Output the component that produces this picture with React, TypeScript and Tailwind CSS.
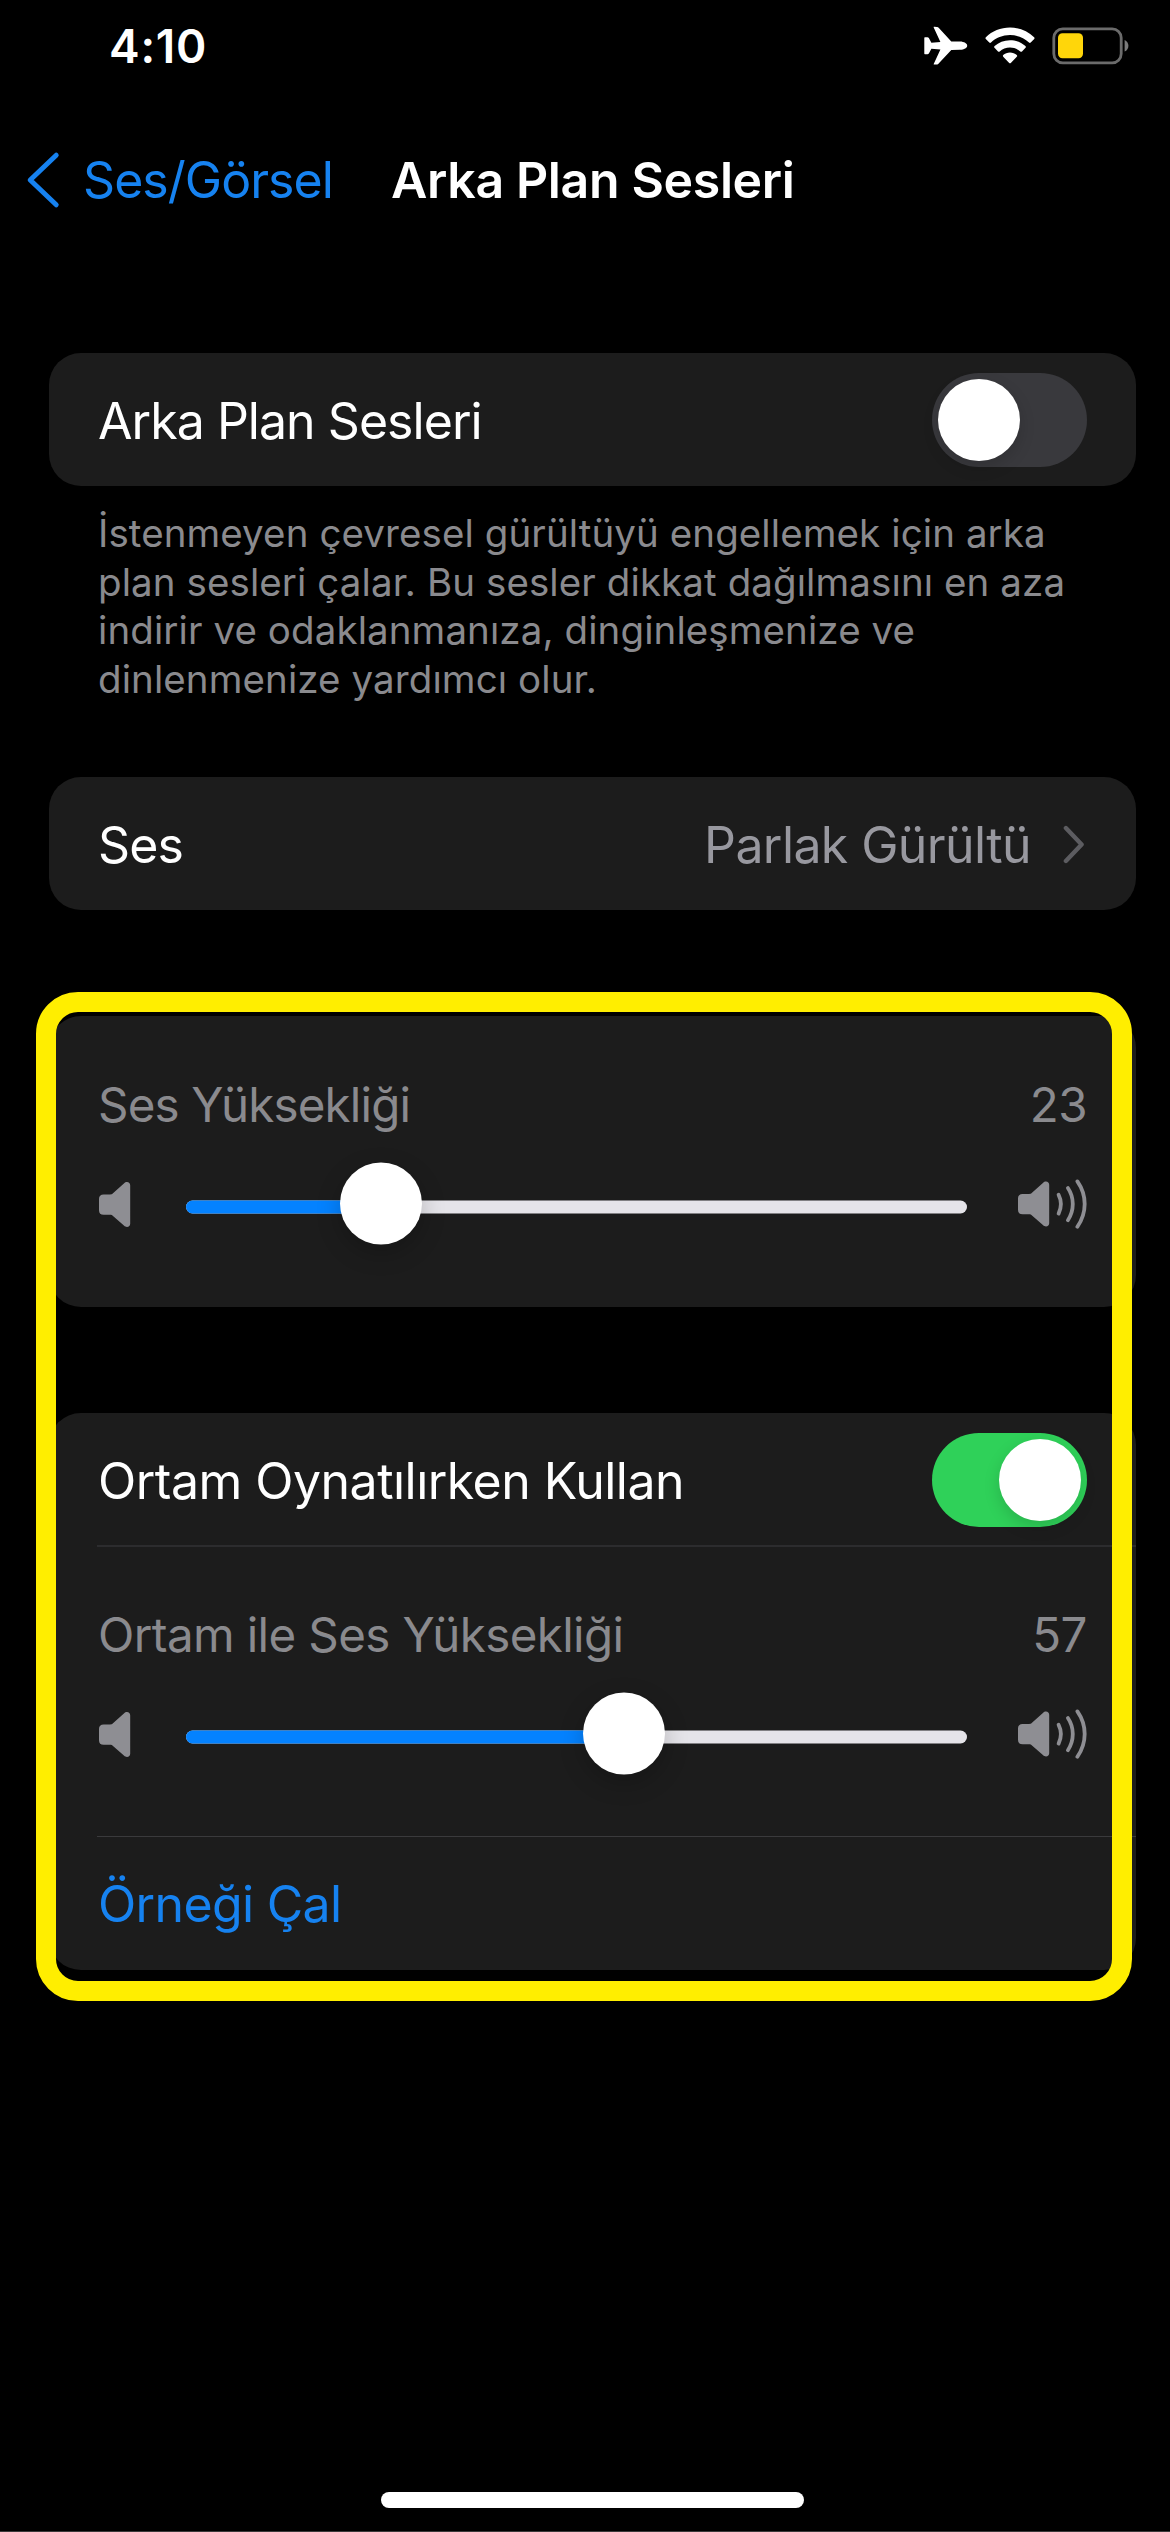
import type { ReactNode } from "react";

function AirplaneIcon() {
  return (
    <svg className="h-[40px] w-[44px]" viewBox="0 0 44 40" fill="#fff">
      <path d="M9.6 1.2 C9.6 .9 9.9 .8 10.3 .8 L13 .9 C13.8 .9 14.3 1.3 14.9 2.1 L27.3 15.6 L36 15.6 C40.2 15.7 43.2 17.6 43.2 19.7 C43.2 21.9 40.2 23.7 36 23.8 L27.3 23.9 L14.9 37.3 C14.3 38.1 13.8 38.5 13 38.6 L10.3 38.6 C9.9 38.6 9.5 38.4 9.7 37.9 L16.4 23.6 L7.4 22.7 L5 27.3 C4.6 28 4.1 28.3 3.4 28.3 L.9 28.3 C.5 28.3 .3 28 .3 27.6 L.3 11.9 C.3 11.5 .5 11.2 .9 11.2 L3.4 11.2 C4.1 11.2 4.6 11.5 5 12.2 L7.4 16.8 L16.4 15.9 Z" />
    </svg>
  );
}

function WifiIcon() {
  return (
    <svg className="h-[38px] w-[50px]" viewBox="0 0 50 38" fill="#fff">
      <path d="M25 .6 C34.4 .6 42.9 4.3 49.1 10.2 C49.7 10.7 49.7 11.4 49.2 11.9 L45.7 15.5 C45.2 16 44.5 16 44 15.5 C39 10.8 32.4 8 25 8 C17.6 8 11 10.8 6 15.5 C5.5 16 4.8 16 4.3 15.5 L.8 11.9 C.3 11.4 .3 10.7 .9 10.2 C7.1 4.3 15.6 .6 25 .6 Z" />
      <path d="M25 13.2 C31 13.2 36.4 15.4 40.4 19.1 C41 19.6 41 20.3 40.5 20.8 L37 24.4 C36.5 24.9 35.8 24.9 35.3 24.4 C32.6 22 29 20.5 25 20.5 C21 20.5 17.4 22 14.7 24.4 C14.2 24.9 13.5 24.9 13 24.4 L9.5 20.8 C9 20.3 9 19.6 9.6 19.1 C13.6 15.4 19 13.2 25 13.2 Z" />
      <path d="M25 25.6 C27.6 25.6 30 26.6 31.8 28.1 C32.3 28.6 32.3 29.2 31.8 29.7 L25.8 35.9 C25.3 36.4 24.7 36.4 24.2 35.9 L18.2 29.7 C17.7 29.2 17.7 28.6 18.2 28.1 C20 26.6 22.4 25.6 25 25.6 Z" />
    </svg>
  );
}

function BatteryIcon() {
  return (
    <svg className="h-[38px] w-[77px]" viewBox="0 0 77 38">
      <rect x="1.8" y="1.8" width="67.4" height="34" rx="9" fill="none" stroke="#6b6b6b" strokeWidth="2.8" />
      <rect x="6" y="6.2" width="25" height="25" rx="4.5" fill="#ffd60a" />
      <path d="M72.6 12.9 C75 13.8 76.4 16.1 76.4 18.7 C76.4 21.3 75 23.6 72.6 24.5 Z" fill="#7b7b7b" />
    </svg>
  );
}

const SPEAKER =
  "M5.6 12.5 L12.3 12.5 C13.3 12.5 14 12.3 14.7 11.6 L25.9 1.4 C27 .4 27.8 0 29 0 C30.9 0 32.2 1.4 32.2 3.2 L32.2 41.8 C32.2 43.6 30.9 45 29 45 C27.8 45 27 44.6 25.9 43.6 L14.7 33.7 C14 33 13.3 32.8 12.3 32.8 L5.6 32.8 C2.6 32.8 1 31.2 1 28.2 L1 17.1 C1 14.1 2.6 12.5 5.6 12.5 Z";

function SpeakerIcon() {
  return (
    <svg className="h-[45px] w-[34px] shrink-0" viewBox="0 0 34 45" fill="#8e8e93">
      <path d={SPEAKER} />
    </svg>
  );
}

function SpeakerLoudIcon() {
  return (
    <svg className="h-[50px] w-[71px] shrink-0" viewBox="0 0 71 50" fill="#8e8e93">
      <path d={SPEAKER} transform="translate(0 2.5)" />
      <g fill="none" stroke="#8e8e93" strokeWidth="3.8" strokeLinecap="round">
        <path d="M41.6 15.8 C44.6 21.6 44.6 28.2 41.6 34.6" />
        <path d="M50.9 9 C57.4 18.6 57.4 31.4 50.9 41.2" />
        <path d="M60.4 2.4 C70.1 16.4 70.1 33.6 60.4 47.8" />
      </g>
    </svg>
  );
}

function Toggle({ on }: { on?: boolean }) {
  return (
    <div
      className={
        on
          ? "flex h-[94px] w-[155px] items-center justify-end rounded-full bg-[#2fd159] p-[6px]"
          : "flex h-[94px] w-[155px] items-center rounded-full bg-[#39393d] p-[6px]"
      }
    >
      <div className="size-[82px] rounded-full bg-white shadow-[0_6px_16px_rgba(0,0,0,0.15)]" />
    </div>
  );
}

function Card({ className = "", children }: { className?: string; children: ReactNode }) {
  return <section className={`mr-[34px] ml-[49px] rounded-[32px] bg-[#1c1c1c] ${className}`}>{children}</section>;
}

function VolumeSlider({ label, value, knob, labelClass }: { label: string; value: number; knob: number; labelClass: string }) {
  return (
    <div className="h-[291px] px-[49px] pt-[59px]">
      <div className="flex h-[60px] items-center justify-between text-[47.5px] leading-[60px] text-[#8a8a8e]">
        <span className={labelClass}>{label}</span>
        <span className="tracking-[-0.5px]">{value}</span>
      </div>
      <div className="mt-[28px] flex h-[82px] items-center">
        <SpeakerIcon />
        <div className="relative ml-[54px] h-[13px] w-[781px] shrink-0 translate-y-[2.5px] rounded-full bg-[#e5e4e9]">
          <div className="h-full rounded-full bg-[#0482ff]" style={{ width: knob }} />
          <div
            className="absolute -top-[38px] size-[82px] -translate-x-1/2 rounded-full bg-white shadow-[0_8px_24px_rgba(0,0,0,0.22)]"
            style={{ left: knob }}
          />
        </div>
        <div className="ml-[50px]">
          <SpeakerLoudIcon />
        </div>
      </div>
    </div>
  );
}

export default function App() {
  return (
    <div className="relative flex h-[2532px] w-[1170px] flex-col overflow-hidden bg-black font-['Inter',sans-serif] text-[50px] leading-[60px] text-white">
      <header className="flex h-[92px] shrink-0 items-center justify-between pr-[41px] pl-[109px]">
        <span className="text-[46px] font-semibold tracking-[0.75px]">4:10</span>
        <div className="flex items-center">
          <AirplaneIcon />
          <div className="ml-[17px]">
            <WifiIcon />
          </div>
          <div className="ml-[17px]">
            <BatteryIcon />
          </div>
        </div>
      </header>

      <nav className="flex h-[176px] shrink-0 items-center pl-[25px] whitespace-nowrap">
        <svg className="h-[58px] w-[36px]" viewBox="0 0 36 58" fill="none" stroke="#1682f0" strokeWidth="5" strokeLinecap="round" strokeLinejoin="round">
          <path d="M31.2 4.2 L5.2 29 L31.2 53.8" />
        </svg>
        <span className="ml-[22px] w-[308px] tracking-[-0.95px] text-[#1682f0]">Ses/Görsel</span>
        <h1 className="font-semibold tracking-[-0.36px]">Arka Plan Sesleri</h1>
      </nav>

      <Card className="mt-[85px] flex h-[133px] shrink-0 items-center justify-between px-[49px]">
        <span className="pt-[2px] tracking-[-0.96px]">Arka Plan Sesleri</span>
        <Toggle />
      </Card>
      <p className="mt-[23px] ml-[98px] h-[194px] shrink-0 text-[38.5px] leading-[48.6px] tracking-[0.09px] whitespace-nowrap text-[#8a8a8e]">
        İstenmeyen çevresel gürültüyü engellemek için arka
        <br />
        plan sesleri çalar. Bu sesler dikkat dağılmasını en aza
        <br />
        indirir ve odaklanmanıza, dinginleşmenize ve
        <br />
        dinlenmenize yardımcı olur.
      </p>

      <Card className="mt-[74px] flex h-[133px] shrink-0 items-center px-[49px]">
        <span className="flex-1 pt-[2px] tracking-[-0.87px]">Ses</span>
        <span className="pt-[2px] tracking-[-0.6px] text-[#98989f]">Parlak Gürültü</span>
        <svg className="ml-[32px] h-[40px] w-[24px]" viewBox="0 0 24 40" fill="none" stroke="#5c5c60" strokeWidth="4.4" strokeLinecap="round" strokeLinejoin="round">
          <path d="M2.9 4 L18.6 20.6 L2.9 37" />
        </svg>
      </Card>

      <div className="relative mt-[106px] shrink-0">
        <Card>
          <VolumeSlider label="Ses Yüksekliği" value={23} knob={195} labelClass="tracking-[-0.81px]" />
        </Card>
        <Card className="mt-[106px]">
          <div className="flex h-[133px] items-center justify-between px-[49px]">
            <span className="pt-[2px] tracking-[-0.52px]">Ortam Oynatılırken Kullan</span>
            <Toggle on />
          </div>
          <div className="-mt-px ml-[48px] h-[2px] bg-[#2c2c2e]" />
          <div className="-mt-px">
            <VolumeSlider label="Ortam ile Ses Yüksekliği" value={57} knob={438} labelClass="tracking-[-0.61px]" />
          </div>
          <div className="-mt-px ml-[48px] h-px bg-[#3a3a3c]" />
          <div className="flex h-[133px] items-center px-[49px] tracking-[-0.66px] text-[#1682f0]">Örneği Çal</div>
        </Card>
        <div className="absolute -top-[24px] left-[36px] h-[1009px] w-[1096px] rounded-[42px] border-[20px] border-[#ffee00]" />
      </div>

      <div className="mt-auto mb-[24px] ml-[381px] h-[16px] w-[423px] shrink-0 rounded-full bg-white" />
      <div className="absolute bottom-0 left-0 h-px w-full bg-[#3a3a3a]" />
    </div>
  );
}
